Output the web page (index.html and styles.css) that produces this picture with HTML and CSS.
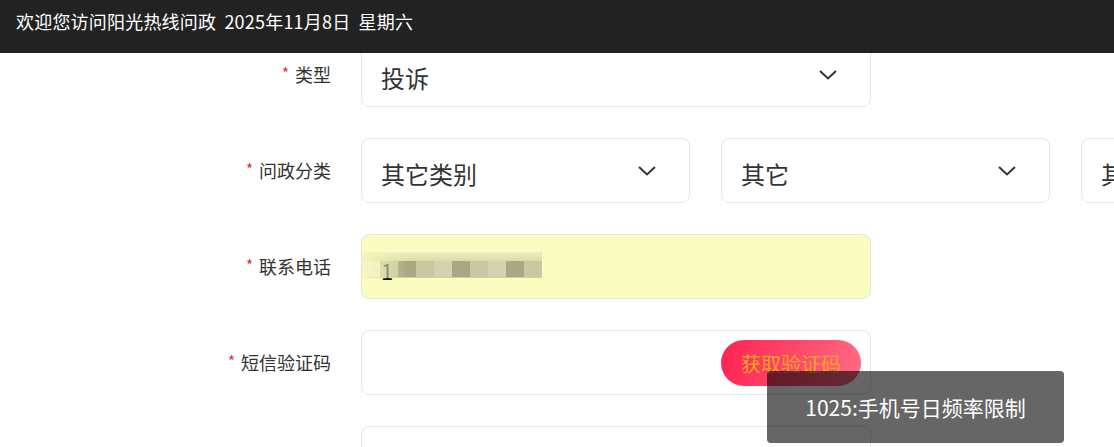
FILE: index.html
```html
<!DOCTYPE html>
<html lang="zh-CN">
<head>
<meta charset="utf-8">
<title>阳光热线问政</title>
<link rel="stylesheet" href="styles.css">
</head>
<body>
<header class="topbar">欢迎您访问阳光热线问政 2025年11月8日 星期六</header>
<main class="form">
  <div class="row">
    <label class="label"><span class="req">*</span>类型</label>
    <div class="field">
      <div class="select wide"><span>投诉</span><svg class="chev" viewBox="0 0 18 10"><path d="M1 1 L9 8.5 L17 1" fill="none" stroke="#333" stroke-width="2"/></svg></div>
    </div>
  </div>
  <div class="row">
    <label class="label"><span class="req">*</span>问政分类</label>
    <div class="field group">
      <div class="select third"><span>其它类别</span><svg class="chev" viewBox="0 0 18 10"><path d="M1 1 L9 8.5 L17 1" fill="none" stroke="#333" stroke-width="2"/></svg></div>
      <div class="select third"><span>其它</span><svg class="chev" viewBox="0 0 18 10"><path d="M1 1 L9 8.5 L17 1" fill="none" stroke="#333" stroke-width="2"/></svg></div>
      <div class="select third"><span>其它</span><svg class="chev" viewBox="0 0 18 10"><path d="M1 1 L9 8.5 L17 1" fill="none" stroke="#333" stroke-width="2"/></svg></div>
    </div>
  </div>
  <div class="row">
    <label class="label"><span class="req">*</span>联系电话</label>
    <div class="field">
      <div class="input wide autofill">
        <span class="digit">1</span>
        <span class="mosaic">
          <i class="m1"></i><i class="m2"></i><i class="m3"></i><i class="m2"></i><i class="m4"></i><i class="m3"></i><i class="m2"></i><i class="m4"></i><i class="m3"></i><i class="m2"></i>
        </span>
      </div>
    </div>
  </div>
  <div class="row">
    <label class="label"><span class="req">*</span>短信验证码</label>
    <div class="field">
      <div class="input wide code"><button class="sms">获取验证码</button></div>
    </div>
  </div>
  <div class="row">
    <label class="label"></label>
    <div class="field">
      <div class="input wide"></div>
    </div>
  </div>
</main>
<div class="toast">1025:手机号日频率限制</div>
</body>
</html>
```
FILE: styles.css
```css
* { box-sizing: border-box; }
html, body { margin: 0; padding: 0; }
body {
  font-family: "Noto Sans CJK SC", "Noto Sans", sans-serif;
  background: #fff;
  color: #333;
  width: 1114px;
  height: 447px;
  overflow: hidden;
  position: relative;
}
.topbar {
  position: fixed;
  top: 0; left: 0; right: 0;
  height: 53px;
  background: #222;
  color: #fff;
  font-size: 18px;
  line-height: 24px;
  padding: 9px 0 0 16px;
  z-index: 5;
  white-space: nowrap;
  word-spacing: 4px;
  letter-spacing: 0.2px;
}
.form {
  padding-top: 42px;
  display: flex;
  flex-direction: column;
  gap: 31px;
}
.row {
  display: flex;
  align-items: center;
  gap: 30px;
}
.label {
  width: 331px;
  flex: none;
  text-align: right;
  font-size: 18px;
  line-height: 24px;
  color: #333;
  white-space: nowrap;
}
.req {
  color: #f5222d;
  font-size: 15px;
  margin-right: 6px;
  position: relative;
  top: -3px;
}
.field { display: flex; flex: none; }
.group { gap: 31px; }
.select, .input {
  height: 65px;
  border: 1px solid #e6e6e6;
  border-radius: 8px;
  background: #fff;
  display: flex;
  align-items: center;
  padding: 0 20px 0 19px;
  font-size: 24px;
  color: #333;
  flex: none;
}
.select span { flex: 1; padding-top: 6px; }
.wide { width: 510px; }
.third { width: 329px; }
.chev { width: 18px; height: 10px; margin-right: 13px; margin-top: 1px; }
.autofill {
  background: #fafdbf;
  border-color: #e4e6d8;
  padding-left: 0;
  position: relative;
}
.digit {
  position: absolute;
  left: 19px;
  top: 24px;
  font-size: 22px;
  color: #111;
  line-height: 22px;
}
.mosaic {
  position: absolute;
  left: 0;
  top: 17px;
  width: 180px;
  height: 26px;
  display: flex;
  background: linear-gradient(to bottom, rgba(230,230,190,0.6) 0%, rgba(210,212,160,0.9) 40%, rgba(205,208,150,0.95) 100%);
  -webkit-mask-image: linear-gradient(to right, rgba(0,0,0,0.3), #000 25%);
}
.mosaic i {
  display: block;
  flex: 1;
  margin-top: 9px;
  height: 16px;
}
.mosaic .m1 { background: #e8e8c4; }
.mosaic .m2 { background: #c8c9a0; }
.mosaic .m3 { background: #a8a982; }
.mosaic .m4 { background: #d2d3ae; }
.code { justify-content: flex-end; padding-right: 9px; }
.sms {
  width: 140px;
  height: 46px;
  border: none;
  border-radius: 23px;
  background: linear-gradient(100deg, #ff2452 0%, #ff4a6b 55%, #ff6a85 100%);
  color: #f5a623;
  font-family: "Noto Sans CJK SC", sans-serif;
  font-size: 20px;
  padding: 0;
  margin-top: 1px;
}
.toast {
  position: absolute;
  left: 767px;
  top: 371px;
  width: 297px;
  height: 72px;
  background: rgba(0, 0, 0, 0.6);
  border-radius: 4px;
  color: #fff;
  font-size: 21px;
  font-weight: 400;
  display: flex;
  align-items: center;
  justify-content: center;
  z-index: 10;
}
```
